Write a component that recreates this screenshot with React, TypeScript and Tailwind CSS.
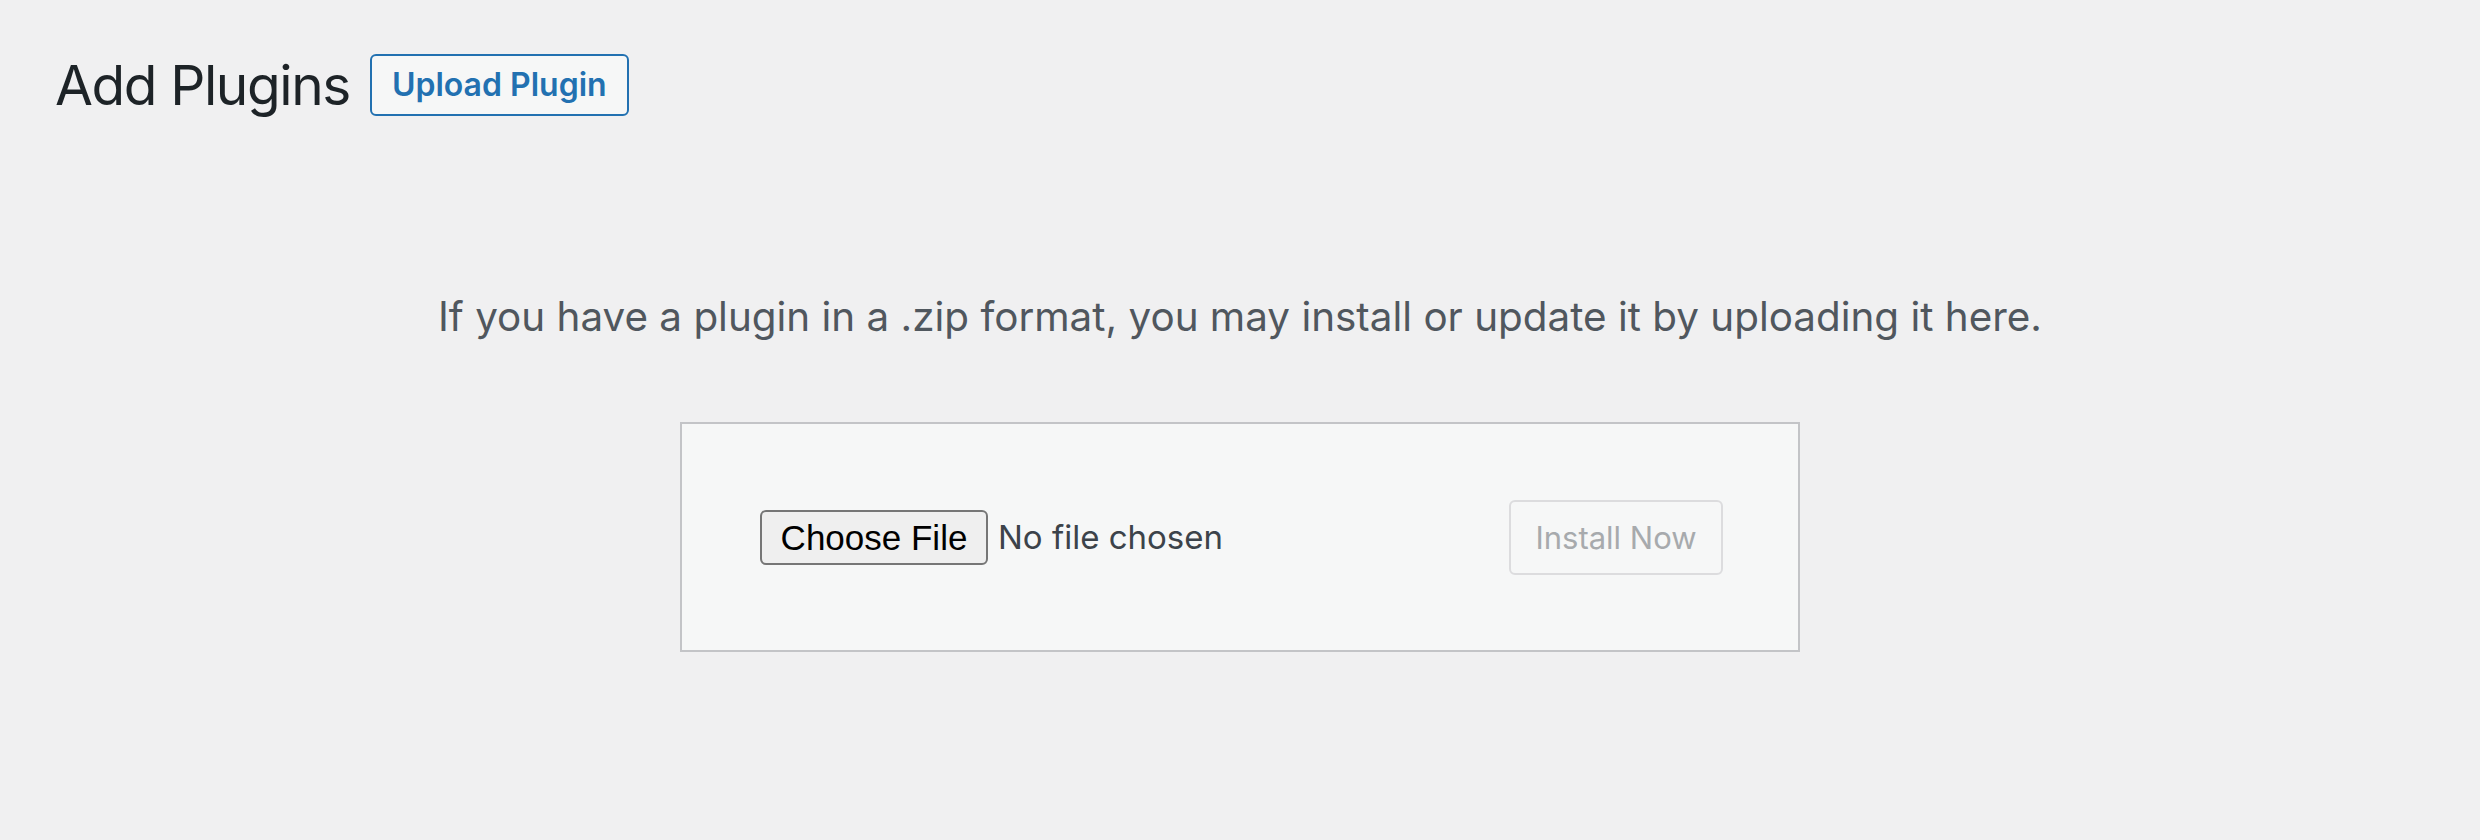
import React from "react";

export default function App() {
  return (
    <div className="w-full h-[840px] bg-[#f0f0f1] font-['Inter',sans-serif]">
      <div className="flex items-center pl-[55px] pt-[54px]">
        <h1 className="text-[55px] leading-[61px] text-[#1d2327] font-normal tracking-[-1.4px]">
          Add Plugins
        </h1>
        <button className="ml-[20px] h-[62px] px-[20px] border-2 border-[#2271b1] rounded-[6px] bg-[#f6f7f7] text-[#2271b1] font-semibold text-[32px] leading-none">
          Upload Plugin
        </button>
      </div>
      <p className="mt-[177px] text-center text-[#50575e] text-[40.4px] leading-[48px]">
        If you have a plugin in a .zip format, you may install or update it by uploading it here.
      </p>
      <div className="mt-[81px] mx-auto w-[1120px] h-[230px] border-2 border-[#c3c4c7] bg-[#f6f7f7] flex items-center justify-between pl-[78px] pr-[75px]">
        <div className="flex items-center">
          <div className="w-[228px] h-[55px] border-2 border-[#767676] rounded-[6px] bg-[#efefef] flex items-center justify-center font-['Liberation_Sans',sans-serif] text-[35px] text-black leading-none">
            Choose File
          </div>
          <span className="ml-[10px] text-[33px] text-[#3c434a] leading-none">No file chosen</span>
        </div>
        <button className="w-[214px] h-[75px] border-2 border-[#dcdcde] rounded-[6px] bg-[#f6f7f7] text-[#a7aaad] text-[31px] leading-none">
          Install Now
        </button>
      </div>
    </div>
  );
}
